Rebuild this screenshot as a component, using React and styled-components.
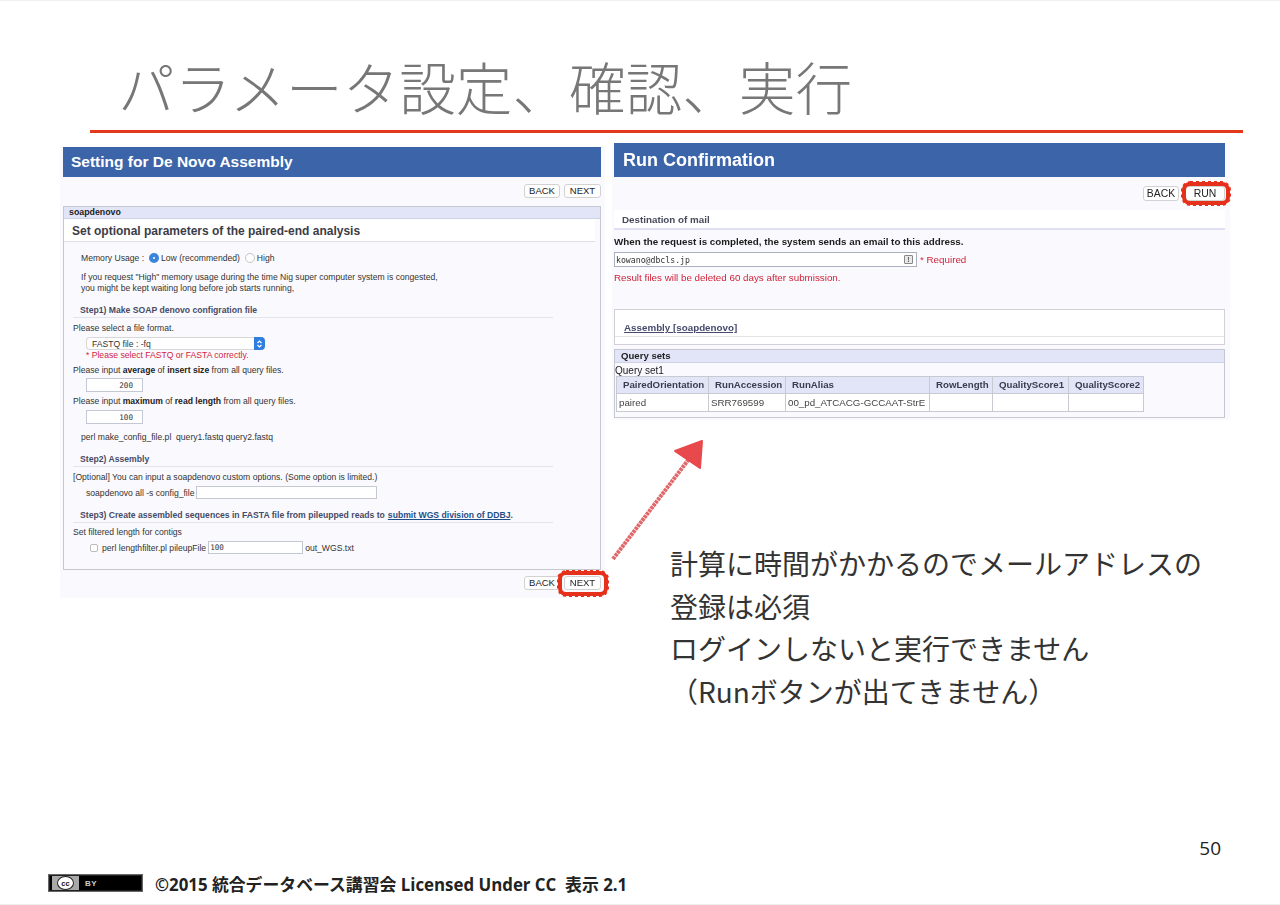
import React from 'react';
import styled, { createGlobalStyle } from 'styled-components';

const GlobalStyle = createGlobalStyle`
html, body {
  margin: 0;
  padding: 0;
  background: #fff;
}
* {
  box-sizing: border-box;
}
`;

const Slide = styled.div`
position: relative;
width: 1280px;
height: 905px;
overflow: hidden;
display: flex;
flex-direction: column;
background: #fff;
border-top: 1px solid #f0f0f0;
border-bottom: 1px solid #eeeeee;
font-family: "Liberation Sans", Arial, sans-serif;
color: #333;
`;

const Title = styled.h1`
margin: 54px 0 0;
padding-left: 118px;
height: 60px;
font-family: "Noto Sans CJK JP", sans-serif;
font-size: 56.6px;
line-height: 60px;
font-weight: 300;
letter-spacing: 0;
color: #777;
white-space: nowrap;
`;

const TitleRule = styled.div`
margin: 15px 0 0 90px;
width: 1153px;
height: 3px;
background: #e2391b;
`;

const Shots = styled.div`
display: grid;
grid-template-columns: 545px 618px;
column-gap: 7px;
margin: 10px 0 0 60px;
align-items: start;
`;

const LeftShot = styled.section`
margin-top: 4px;
padding: 0 4px 8px 3px;
background: #fafafe;
filter: blur(0.3px);
`;

const RightColumn = styled.div`
display: flex;
flex-direction: column;
`;

const RightShot = styled.section`
padding: 0 5px 2px 2px;
background: #fafafe;
filter: blur(0.3px);
`;

const Banner = styled.div`
display: flex;
align-items: center;
height: ${p => p.$h}px;
padding-left: ${p => p.$pad}px;
background: #3c64a9;
color: #fff;
font-weight: 700;
font-size: ${p => p.$size}px;
`;

const ButtonBar = styled.div`
display: flex;
justify-content: flex-end;
gap: ${p => p.$gap}px;
padding: ${p => p.$top}px 0 ${p => p.$bottom}px;
`;

const Btn = styled.div`
position: relative;
display: flex;
align-items: center;
justify-content: center;
width: ${p => p.$w}px;
height: ${p => p.$h}px;
padding-bottom: 1px;
background: #fff;
border: 1px solid #d2d2d2;
border-radius: 3px;
font-size: ${p => p.$size}px;
color: #222;
`;

const Scribble = styled.span`
position: absolute;
left: ${p => p.$l}px;
right: ${p => p.$r}px;
top: ${p => p.$t}px;
bottom: ${p => p.$b}px;
border: 4px solid #e5301c;
border-radius: 8px;
outline: 3px dotted #e5301c;
outline-offset: -2px;
`;

const Box = styled.div`
border: 1px solid #c6c8d0;
padding-bottom: ${p => p.$pb || 0}px;
margin-top: ${p => p.$mt || 0}px;
background: ${p => p.$bg || '#fafafe'};
`;

const BoxHead = styled.div`
display: flex;
align-items: center;
height: ${p => p.$h}px;
padding: 0 0 1px ${p => p.$pad}px;
background: #e2e5f8;
border-bottom: 1px solid #cfd2e4;
font-weight: 700;
font-size: ${p => p.$size}px;
color: #222;
`;

const SectionTitle = styled.div`
display: flex;
align-items: center;
height: 23px;
margin-right: 5px;
padding: 2px 0 0 8px;
background: #fff;
border-bottom: 1px solid #e0e0e8;
font-size: 12px;
font-weight: 700;
color: #3c3c46;
`;

const Row = styled.div`
display: flex;
align-items: center;
height: ${p => p.$h || 12}px;
margin-top: ${p => p.$mt}px;
padding-left: ${p => p.$x}px;
font-size: 8.6px;
color: ${p => p.$red ? '#d0243c' : '#333'};
white-space: pre;
b {
  color: #222;
}
`;

const Para = styled.p`
margin: ${p => p.$mt}px 0 0;
padding-left: 17px;
font-size: 8.6px;
line-height: 11px;
color: #333;
`;

const StepHead = styled.div`
display: flex;
align-items: center;
height: 13px;
width: 480px;
margin: ${p => p.$mt}px 0 0 9px;
padding: 0 0 2px 7px;
border-bottom: 1px solid #e4e4ec;
font-size: 8.65px;
font-weight: 700;
color: #474a66;
white-space: nowrap;
a {
  color: #1f4f86;
  text-decoration: underline;
  margin-left: 3px;
}
`;

const Radio = styled.span`
display: inline-block;
width: 10px;
height: 10px;
margin: 0 2px 0 ${p => p.$ml}px;
border-radius: 50%;
background: ${p => p.$on ? '#3b84dc' : '#fff'};
border: ${p => p.$on ? '3px solid #3b84dc' : '1px solid #c4c4c4'};
position: relative;
&::after {
  content: '';
  display: ${p => p.$on ? 'block' : 'none'};
  position: absolute;
  left: 1px;
  top: 1px;
  width: 2px;
  height: 2px;
  background: #fff;
  border-radius: 50%;
}
`;

const SelectBox = styled.div`
display: flex;
align-items: center;
justify-content: space-between;
width: 178px;
height: 13px;
margin: 3px 0 0 22px;
padding-left: 5px;
background: #fff;
border: 1px solid #d8d8d8;
border-right: none;
border-radius: 4px;
font-size: 8.6px;
color: #333;
`;

const Stepper = styled.span`
display: flex;
align-items: center;
justify-content: center;
width: 11px;
height: 13px;
margin-right: -1px;
background: #2f7fe0;
border-radius: 0 4px 4px 0;
`;

const TextInput = styled.input`
display: block;
width: ${p => p.$w}px;
height: ${p => p.$h}px;
margin: ${p => p.$my || 0}px ${p => p.$mr || 0}px 0 ${p => p.$ml || 0}px;
padding: 0 ${p => p.$right ? 9 : 1}px 0 1px;
background: #fff;
border: 1px solid #c4c8d4;
border-radius: 0;
outline: none;
font-family: "DejaVu Sans Mono", "Liberation Mono", monospace;
font-size: 7.6px;
color: #333;
text-align: ${p => p.$right ? 'right' : 'left'};
`;

const Check = styled.span`
display: inline-block;
width: 8px;
height: 8px;
margin-right: 4px;
background: #fff;
border: 1px solid #bcbcbc;
border-radius: 2px;
`;

const MailStrip = styled.div`
display: flex;
align-items: center;
height: 20px;
padding: 1px 0 0 8px;
background: #fff;
border-bottom: 2px solid #dfe0f2;
font-size: 9.8px;
font-weight: 700;
color: #474a5a;
`;

const Notice = styled.div`
margin-top: 6px;
height: 12px;
line-height: 12px;
font-size: 9.8px;
font-weight: 700;
color: #1c1c1c;
white-space: nowrap;
`;

const MailRow = styled.div`
display: flex;
align-items: center;
margin-top: 4px;
height: 15px;
`;

const MailInput = styled.div`
display: flex;
align-items: center;
justify-content: space-between;
width: 303px;
height: 15px;
padding: 0 3px 0 1px;
background: #fff;
border: 1px solid #aab0c0;
font-family: "DejaVu Sans Mono", "Liberation Mono", monospace;
font-size: 8.2px;
color: #333;
`;

const KeyIcon = styled.span`
display: flex;
align-items: center;
justify-content: center;
width: 9px;
height: 9px;
background: #e8e8e8;
border: 1px solid #888;
border-radius: 1px;
color: #555;
font-size: 7px;
font-family: "Liberation Sans", sans-serif;
font-weight: 700;
`;

const RedNote = styled.span`
display: block;
margin: ${p => p.$mt || 0}px 0 0 ${p => p.$ml || 0}px;
height: 12px;
line-height: 12px;
font-size: 9.8px;
color: #cf2338;
white-space: nowrap;
`;

const AssemblyBox = styled.div`
height: 36px;
margin-top: 25px;
padding-top: 12px;
background: #fff;
border: 1px solid #d2d2d6;
`;

const AssemblyLink = styled.div`
height: 15px;
padding-left: 9px;
border-bottom: 1px solid #e4e4e4;
font-size: 9.8px;
font-weight: 700;
line-height: 12px;
color: #474a6c;
text-decoration: underline;
`;

const QueryLabel = styled.div`
height: 13px;
padding-top: 1px;
line-height: 13px;
font-size: 10px;
color: #222;
`;

const QueryTable = styled.table`
table-layout: fixed;
width: 527px;
margin-left: 1px;
border-collapse: collapse;
font-size: 9.75px;
th, td {
  border: 1px solid #c8cad2;
  padding: 0 0 1px 2px;
  overflow: hidden;
  white-space: nowrap;
}
th {
  height: 17px;
  background: #e2e5f8;
  font-weight: 700;
  color: #3c3c50;
  text-align: left;
  padding-left: 6px;
  font-size: 9.7px;
}
td {
  height: 18px;
  background: #fff;
  color: #444;
}
`;

const Notes = styled.div`
margin: 122px 0 0 58px;
font-family: "Noto Sans CJK JP", sans-serif;
font-size: 28px;
line-height: 42.6px;
color: #333;
white-space: nowrap;
`;

const BottomBlock = styled.div`
margin-top: auto;
padding-bottom: 12px;
`;

const PageNumber = styled.div`
padding-right: 59px;
height: 22px;
line-height: 22px;
text-align: right;
font-family: "Open Sans", sans-serif;
font-size: 19px;
color: #222;
`;

const Footer = styled.footer`
display: flex;
align-items: center;
gap: 12px;
height: 18px;
margin-top: 15px;
padding-left: 48px;
font-family: "Open Sans", "Noto Sans CJK JP", sans-serif;
font-size: 16.85px;
font-weight: 700;
color: #222;
white-space: pre;
`;

const CcBadge = styled.div`
display: flex;
align-items: center;
width: 95px;
height: 18px;
background: #000;
border: 1px solid #666;
outline: 1px solid #222;
outline-offset: -2px;
`;

const CcLeft = styled.div`
display: flex;
align-items: center;
justify-content: center;
width: 27px;
height: 14px;
margin-left: 3px;
background: #a8a8a8;
`;

const CcCircle = styled.span`
display: flex;
align-items: center;
justify-content: center;
width: 17px;
height: 14px;
background: #fff;
border: 1.5px solid #222;
border-radius: 50%;
font-size: 7.5px;
font-weight: 700;
font-family: "Liberation Sans", sans-serif;
color: #111;
`;

const CcBy = styled.span`
margin-left: 3px;
padding: 0 3px;
font-family: "Liberation Sans", sans-serif;
font-size: 8px;
font-weight: 700;
color: #ccc;
letter-spacing: 0.5px;
`;

const ArrowArt = styled.svg`
position: absolute;
left: 600px;
top: 430px;
width: 115px;
height: 140px;
`;

function App() {
  const columns = ['PairedOrientation', 'RunAccession', 'RunAlias', 'RowLength', 'QualityScore1', 'QualityScore2'];
  const widths = [92, 77, 144, 63, 76, 75];
  const cells = ['paired', 'SRR769599', '00_pd_ATCACG-GCCAAT-StrE', '', '', ''];

  return (
    <Slide>
      <GlobalStyle />
      <Title>パラメータ設定、確認、実行</Title>
      <TitleRule />
      <Shots>
        <LeftShot>
          <Banner $h={30} $pad={8} $size={15.5}>Setting for De Novo Assembly</Banner>
          <ButtonBar $gap={4} $top={7} $bottom={8}>
            <Btn $w={36} $h={14} $size={9.5}>BACK</Btn>
            <Btn $w={37} $h={14} $size={9.5}>NEXT</Btn>
          </ButtonBar>
          <Box $pb={15}>
            <BoxHead $h={12} $pad={5} $size={8.8}>soapdenovo</BoxHead>
            <SectionTitle>Set optional parameters of the paired-end analysis</SectionTitle>
            <Row $mt={10} $x={17}>
              Memory Usage :
              <Radio $on $ml={5} />Low (recommended)
              <Radio $ml={5} />High
            </Row>
            <Para $mt={8}>
              If you request "High" memory usage during the time Nig super computer system is congested,<br />
              you might be kept waiting long before job starts running,
            </Para>
            <StepHead $mt={11}>Step1) Make SOAP denovo configration file</StepHead>
            <Row $mt={4} $x={9}>Please select a file format.</Row>
            <SelectBox>
              FASTQ file : -fq
              <Stepper>
                <svg width="7" height="10" viewBox="0 0 7 10" fill="none" stroke="#fff" strokeWidth="1.2">
                  <path d="M1.5 4 3.5 2l2 2M1.5 6l2 2 2-2" />
                </svg>
              </Stepper>
            </SelectBox>
            <Row $mt={0} $h={10} $x={22} $red>* Please select FASTQ or FASTA correctly.</Row>
            <Row $mt={4} $x={9}>Please input <b>average</b> of <b>insert size</b> from all query files.</Row>
            <TextInput $w={57} $h={14} $my={2} $ml={22} $right readOnly value="200" />
            <Row $mt={3} $x={9}>Please input <b>maximum</b> of <b>read length</b> from all query files.</Row>
            <TextInput $w={57} $h={14} $my={3} $ml={22} $right readOnly value="100" />
            <Row $mt={7} $x={17}>perl make_config_file.pl  query1.fastq query2.fastq</Row>
            <StepHead $mt={11}>Step2) Assembly</StepHead>
            <Row $mt={4} $x={9}>[Optional] You can input a soapdenovo custom options. (Some option is limited.)</Row>
            <Row $mt={3} $h={13} $x={22}>
              soapdenovo all -s config_file
              <TextInput $w={181} $h={13} $ml={2} readOnly value="" />
            </Row>
            <StepHead $mt={11}>
              Step3) Create assembled sequences in FASTA file from pileupped reads to<a href="#wgs">submit WGS division of DDBJ</a>.
            </StepHead>
            <Row $mt={3} $x={9}>Set filtered length for contigs</Row>
            <Row $mt={3} $h={13} $x={26}>
              <Check />perl lengthfilter.pl pileupFile
              <TextInput $w={95} $h={13} $ml={2} $mr={2} readOnly value="100" />
              out_WGS.txt
            </Row>
          </Box>
          <ButtonBar $gap={4} $top={6} $bottom={0}>
            <Btn $w={36} $h={14} $size={9.5}>BACK</Btn>
            <Btn $w={37} $h={14} $size={9.5}>
              NEXT
              <Scribble $l={-7} $r={-8} $t={-6} $b={-7} />
            </Btn>
          </ButtonBar>
        </LeftShot>
        <RightColumn>
          <RightShot>
            <Banner $h={34} $pad={9} $size={18}>Run Confirmation</Banner>
            <ButtonBar $gap={6} $top={9} $bottom={9}>
              <Btn $w={36} $h={15} $size={10.4}>BACK</Btn>
              <Btn $w={40} $h={15} $size={10.4}>
                RUN
                <Scribble $l={-4} $r={-6} $t={-5} $b={-5} />
              </Btn>
            </ButtonBar>
            <MailStrip>Destination of mail</MailStrip>
            <Notice>When the request is completed, the system sends an email to this address.</Notice>
            <MailRow>
              <MailInput>
                kowano@dbcls.jp
                <KeyIcon>!</KeyIcon>
              </MailInput>
              <RedNote $ml={3}>* Required</RedNote>
            </MailRow>
            <RedNote $mt={5}>Result files will be deleted 60 days after submission.</RedNote>
            <AssemblyBox>
              <AssemblyLink>Assembly [soapdenovo]</AssemblyLink>
            </AssemblyBox>
            <Box $mt={4} $pb={5}>
              <BoxHead $h={13} $pad={6} $size={9.6}>Query sets</BoxHead>
              <QueryLabel>Query set1</QueryLabel>
              <QueryTable>
                <colgroup>
                  {widths.map((w, idx) => <col key={idx} width={w} />)}
                </colgroup>
                <thead>
                  <tr>{columns.map(name => <th key={name}>{name}</th>)}</tr>
                </thead>
                <tbody>
                  <tr>{cells.map((text, idx) => <td key={idx}>{text}</td>)}</tr>
                </tbody>
              </QueryTable>
            </Box>
          </RightShot>
          <Notes>
            計算に時間がかかるのでメールアドレスの<br />
            登録は必須<br />
            ログインしないと実行できません<br />
            （Runボタンが出てきません）
          </Notes>
        </RightColumn>
      </Shots>
      <BottomBlock>
        <PageNumber>50</PageNumber>
        <Footer>
          <CcBadge>
            <CcLeft><CcCircle>cc</CcCircle></CcLeft>
            <CcBy>BY</CcBy>
          </CcBadge>
          ©2015 統合データベース講習会 Licensed Under CC  表示 2.1
        </Footer>
      </BottomBlock>
      <ArrowArt viewBox="0 0 115 140" aria-hidden="true">
        <path d="M13 128 92 24" stroke="#e0676a" strokeWidth="4" strokeDasharray="3 0.7" fill="none" />
        <path d="M75 20 102 10 100 37Z" fill="#e8494c" stroke="#e8494c" strokeWidth="2" strokeLinejoin="round" />
      </ArrowArt>
    </Slide>
  );
}

export default App;
